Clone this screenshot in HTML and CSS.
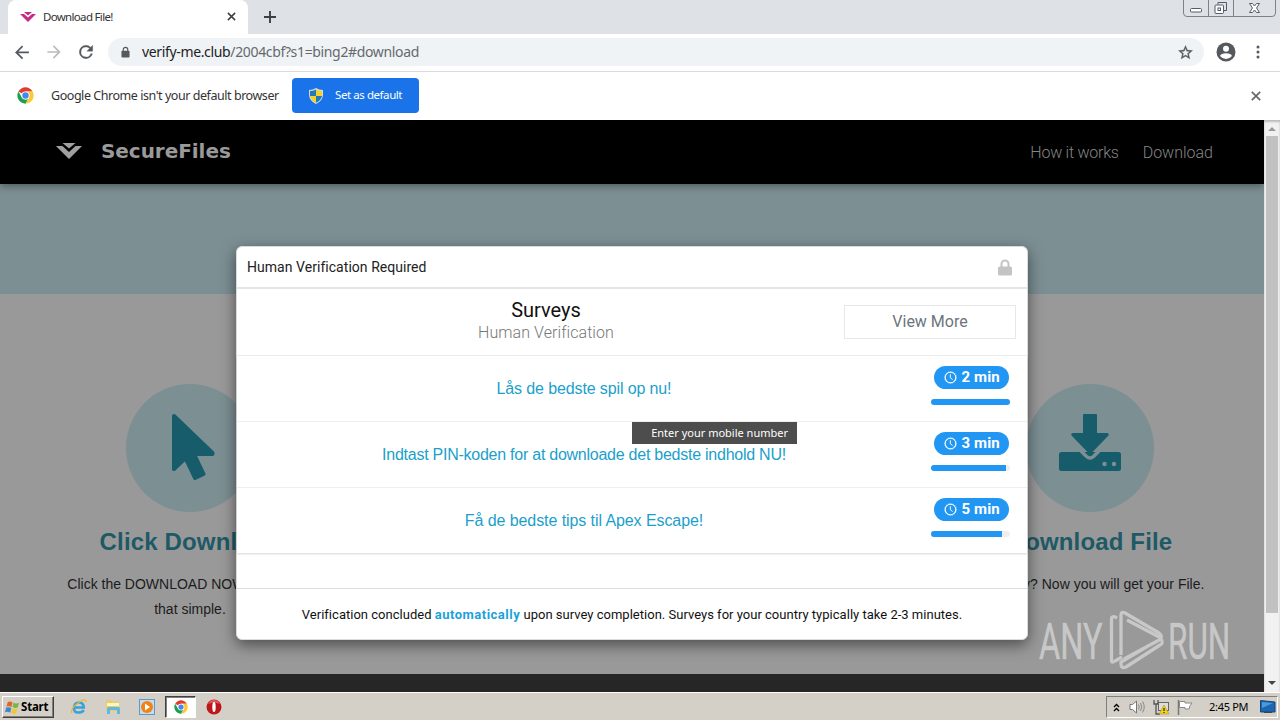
FILE: index.html
```html
<!DOCTYPE html>
<html lang="en">
<head>
<meta charset="utf-8">
<title>Download File!</title>
<link rel="stylesheet" href="styles.css">
</head>
<body>
<svg class="defs" width="0" height="0">
  <symbol id="chrome" viewBox="0 0 48 48">
    <circle cx="24" cy="24" r="23" fill="#fff"/>
    <path d="M24 24 4.1 12.5A23 23 0 0 1 43.900 12.500L24 12.500z" fill="#e33b2e"/>
    <path d="M24 13H44.100A23 23 0 0 1 24 47L34 30z" fill="#fcc934"/>
    <path d="M4.100 12.500 14 30 24 35.500 31 34 24 47A23 23 0 0 1 4.100 12.500z" fill="#1e9e4f"/>
    <circle cx="24" cy="24" r="11.500" fill="#fff"/>
    <circle cx="24" cy="24" r="9" fill="#4587f3"/>
  </symbol>
  <symbol id="vee" viewBox="0 0 26 16">
    <path d="M0 3H6.500L13 9 19.500 3H26L13 16z"/><path d="M6.500 0H19.500L13 5.500z"/>
  </symbol>
  <symbol id="clock" viewBox="0 0 14 14">
    <circle cx="7" cy="7" r="5.700" fill="none" stroke="#fff" stroke-width="1.100"/>
    <circle cx="7" cy="7" r="6.300" fill="none" stroke="#fff" stroke-width=".8" stroke-dasharray="1.200 1.200"/>
    <path d="M6.800 3.500V7.200L9.300 9.200" fill="none" stroke="#fff" stroke-width="1"/>
  </symbol>
</svg>
<div class="screen">
  <header class="tabstrip">
    <div class="tab">
      <svg class="tab-icon" viewBox="0 0 26 16" fill="#c72a85"><use href="#vee"/></svg>
      <span class="tab-title">Download File!</span>
      <svg class="tab-close" viewBox="0 0 10 10"><path d="M1 1 9 9M9 1 1 9" stroke="#3c4043" stroke-width="1.700"/></svg>
    </div>
    <svg class="new-tab" viewBox="0 0 12 12"><path d="M6 0V12M0 6H12" stroke="#3c4043" stroke-width="1.900"/></svg>
    <svg class="window-buttons" viewBox="0 0 94 18" fill="none">
      <path d="M.5 0V13Q.5 16.500 4 16.500H89Q92.500 16.500 92.500 13V0M25.500 0V16M50.500 0V16" stroke="#7d818a"/>
      <rect x="7.500" y="8.500" width="11" height="3.500" rx="1" stroke="#555c68" fill="#fff"/>
      <path d="M35 4.500V2.500H43.500V10.500H41" stroke="#555c68"/>
      <rect x="32" y="5" width="8.500" height="8.500" rx="1" stroke="#555c68" fill="#fff"/><rect x="35" y="8" width="2.500" height="2.500" stroke="#555c68"/>
      <path d="M66.500 3.500H69.500L71.500 6 73.500 3.500H76.500L73.500 8 76.500 12.500H73.500L71.500 10 69.500 12.500H66.500L69.500 8z" stroke="#555c68" fill="#fff"/>
    </svg>
  </header>
  <div class="toolbar">
    <svg class="nav-icon" viewBox="0 0 24 24" fill="#55595e"><path d="M20 11H7.830l5.590-5.590L12 4l-8 8 8 8 1.410-1.410L7.830 13H20z" transform="translate(-.500 0) scale(1.040)"/></svg>
    <svg class="nav-icon" viewBox="0 0 24 24" fill="#bbbcbe"><path d="M12 4l-1.410 1.410L16.170 11H4v2h12.170l-5.580 5.590L12 20l8-8z"/></svg>
    <svg class="nav-icon" viewBox="0 0 24 24" fill="#55595e" stroke="#55595e" stroke-width=".4"><path d="M17.650 6.350A7.960 7.960 0 0 0 12 4a8 8 0 1 0 7.730 10h-2.080A6 6 0 1 1 12 6c1.660 0 3.140.690 4.220 1.780L13 11h7V4z"/></svg>
    <div class="omnibox">
      <svg class="padlock" viewBox="0 0 10 12"><path d="M2.500 5V3.300a2.500 2.500 0 0 1 5 0V5" fill="none" stroke="#55595e" stroke-width="1.300"/><rect x=".5" y="4.500" width="9" height="7.500" rx="1" fill="#55595e"/></svg>
      <span class="url"><b>verify-me.club</b>/2004cbf?s1=bing2#download</span>
      <svg class="star" viewBox="0 0 24 24" fill="#55595e" stroke="#55595e" stroke-width=".4"><path d="M22 9.240l-7.190-.62L12 2 9.190 8.630 2 9.240l5.460 4.730L5.820 21 12 17.270 18.180 21l-1.630-7.030zM12 15.400l-3.760 2.270 1-4.280-3.320-2.880 4.380-.38L12 6.100l1.710 4.040 4.380.38-3.320 2.880 1 4.280z"/></svg>
    </div>
    <svg class="avatar" viewBox="0 0 20 20"><circle cx="10" cy="10" r="9.500" fill="#55595e"/><circle cx="10" cy="6.700" r="3" fill="#fff"/><path d="M4 14Q5 11.200 10 11.200T16 14Q13.500 17 10 17T4 14z" fill="#fff"/></svg>
    <svg class="kebab" viewBox="0 0 4 14" fill="#55595e"><circle cx="2" cy="2" r="1.500"/><circle cx="2" cy="7" r="1.500"/><circle cx="2" cy="12" r="1.500"/></svg>
  </div>
  <div class="infobar">
    <svg class="info-chrome"><use href="#chrome"/></svg>
    <span class="info-text">Google Chrome isn't your default browser</span>
    <div class="default-button">
      <svg class="shield" viewBox="0 0 14 16"><path d="M7 0Q10 2 14 2V7Q13.500 13 7 16 .5 13 0 7V2Q4 2 7 0z" fill="#d5dbe0"/><path d="M7 1.500V8H1V3Q4 3 7 1.500zM7 8H13Q12 12.500 7 14.700z" fill="#2479b8"/><path d="M7 1.500V8H13V3Q10 3 7 1.500zM7 8H1Q2 12.500 7 14.700z" fill="#f5d22b"/></svg>
      <span>Set as default</span>
    </div>
    <svg class="info-close" viewBox="0 0 10 10"><path d="M.8.800 9.200 9.200M9.200.800.800 9.200" stroke="#686c70" stroke-width="1.800"/></svg>
  </div>
  <div class="viewport">
    <main class="page">
      <nav class="navbar">
        <svg class="brand-icon" viewBox="0 0 26 16" fill="#a0a0a0"><use href="#vee"/></svg>
        <span class="brand">SecureFiles</span>
        <span class="nav-link">How it works</span>
        <span class="nav-link second">Download</span>
      </nav>
      <div class="hero"></div>
      <section class="steps">
        <div class="step first">
          <div class="disc">
            <svg viewBox="0 0 128 128"><path d="M48 32 86.500 69V70H68L77.500 90 69 94 59.500 74 48 85V32z" fill="#175c6b" stroke="#175c6b" stroke-width="4" stroke-linejoin="round"/></svg>
          </div>
          <h2>Click Download</h2>
          <p>Click the DOWNLOAD NOW button, it's<br>that simple.</p>
        </div>
        <div class="step last">
          <div class="disc">
            <svg viewBox="0 0 128 128"><rect x="33" y="68" width="62" height="19" rx="2.500" fill="#175c6b"/><path d="M53 65 60.500 72.500Q64 75.500 67.500 72.500L75 65" fill="none" stroke="#7c8f93" stroke-width="3.500"/><path d="M57 31Q57 30 58 30H70Q71 30 71 31V49H81Q84 49.500 82 52L65.500 69Q64 70.500 62.500 69L46 52Q44 49.500 47 49H57z" fill="#175c6b"/><circle cx="78.500" cy="80" r="2.200" fill="#7c8f93"/><circle cx="88" cy="80" r="2.200" fill="#7c8f93"/></svg>
          </div>
          <h2>Download File</h2>
          <p>All ready? Now you will get your File.</p>
        </div>
      </section>
      <div class="page-footer"></div>
    </main>
    <div class="scrollbar">
      <svg viewBox="0 0 8 4" fill="#999"><path d="M0 4 4 0 8 4z"/></svg>
      <div class="thumb"></div>
      <svg class="down" viewBox="0 0 8 4" fill="#444"><path d="M0 0 4 4 8 0z"/></svg>
    </div>
    <div class="modal">
      <div class="modal-head"><span>Human Verification Required</span>
        <svg viewBox="0 0 14 17"><path d="M3.500 8V5a3.500 3.500 0 0 1 7 0V8" fill="none" stroke="#c4c4c4" stroke-width="2"/><rect y="7.500" width="14" height="9" rx="1.500" fill="#c4c4c4"/></svg>
      </div>
      <div class="survey-head">
        <div class="survey-title"><strong>Surveys</strong><span>Human Verification</span></div>
        <div class="view-more">View More</div>
      </div>
      <div class="offers">
        <div class="offer"><span class="offer-name o1">Lås de bedste spil op nu!</span><div class="time"><div class="pill"><svg><use href="#clock"/></svg><span>2 min</span></div><div class="bar"><div class="fill" style="width:100%"></div></div></div></div>
        <div class="offer"><span class="offer-name o2">Indtast PIN-koden for at downloade det bedste indhold NU!</span><div class="time"><div class="pill"><svg><use href="#clock"/></svg><span>3 min</span></div><div class="bar"><div class="fill" style="width:95%"></div></div></div></div>
        <div class="offer"><span class="offer-name o3">Få de bedste tips til Apex Escape!</span><div class="time"><div class="pill"><svg><use href="#clock"/></svg><span>5 min</span></div><div class="bar"><div class="fill" style="width:90%"></div></div></div></div>
      </div>
      <div class="modal-foot"><span>Verification concluded <b>automatically</b> upon survey completion. Surveys for your country typically take 2-3 minutes.</span></div>
      <div class="tooltip">Enter your mobile number</div>
    </div>
    <div class="watermark">
      <svg viewBox="0 0 200 70">
        <g fill="#d0d0d0" fill-opacity=".85" stroke="#d0d0d0" stroke-opacity=".6" stroke-width=".7" font-family="Roboto, sans-serif" font-size="50"><text transform="translate(3 54) scale(.65 1)">ANY</text><text transform="translate(132 54) scale(.63 1)">RUN</text></g>
        <path d="M81 13Q75.500 10 75.500 14V56Q76 58 79 56L86 52M85 50V10Q85 6 89 8L123 28Q126 30 125 33L91 15M88 54 125 34Q128 38 124 40L90 62Q85 64 85 59V57L112 41" fill="none" stroke="#d0d0d0" stroke-opacity=".85" stroke-width="3.300" stroke-linejoin="round"/>
      </svg>
    </div>
  </div>
  <footer class="taskbar">
    <div class="start">
      <svg viewBox="0 0 16 14"><path d="M3 1Q6 0 8 1.500L7 6.500Q4.500 5 1.500 6z" fill="#e5622c"/><path d="M9 2Q12 3.500 15 2L13.500 7Q11 8 8 6.500z" fill="#75b843"/><path d="M1.300 7Q4 6 6.700 7.500L5.500 12.500Q3 11 0 12z" fill="#3987cf"/><path d="M7.800 8Q10.500 9.300 13.200 8.300L12 13Q9 14.300 6.500 13z" fill="#f5c52c"/></svg>
      <span>Start</span>
    </div>
    <svg class="task-icon ie" viewBox="0 0 16 16"><path d="M3.500 8.500H12.800Q12.500 3.500 8 3.500T3 8.700 8 13.500Q11.500 13.500 12.600 11" fill="none" stroke="#35a2dd" stroke-width="2.600"/><path d="M1 14Q-1 10 7 4T15 3" fill="none" stroke="#e9b62c" stroke-width="1.200"/></svg>
    <svg class="task-icon folder" viewBox="0 0 16 16"><path d="M1 3V1H6L7 2.500H14V12H1z" fill="#e9cc6c"/><path d="M2 4H14V7H2z" fill="#fff3be"/><path d="M2 15V10Q2 8 4 8H13Q15 8 15 10V15H12V11H5V15z" fill="#5eb9de"/></svg>
    <svg class="task-icon player" viewBox="0 0 16 16"><rect x=".5" y=".5" width="15" height="15" fill="#c4dcee" stroke="#5c9acd"/><circle cx="8" cy="8" r="6" fill="#f08316"/><path d="M6 4.500V11.500L11 8z" fill="#fff"/></svg>
    <div class="active-task"><svg><use href="#chrome"/></svg></div>
    <svg class="task-icon opera" viewBox="0 0 16 16"><circle cx="8" cy="8" r="7.500" fill="#bd171b"/><path d="M2 5Q4 .8 8 1T14 5Q8 2 2 5z" fill="#df5c5b"/><ellipse cx="8" cy="8" rx="1.700" ry="5" fill="#fff"/></svg>
    <div class="tray">
      <svg class="chev" viewBox="0 0 7 9"><path d="M1 4 3.500 1.500 6 4M1 8 3.500 5.500 6 8" fill="none" stroke="#000" stroke-width="1.300"/></svg>
      <svg class="speaker" viewBox="0 0 16 14" fill="none"><path d="M1 4.500H3.500L7.500 1V13L3.500 9.500H1z" fill="#fff" stroke="#777"/><path d="M9.500 4.500Q11 7 9.500 9.500M11.500 3Q14 7 11.500 11M13.500 1.500Q17 7 13.500 12.500" stroke="#888"/></svg>
      <svg class="network" viewBox="0 0 16 16"><rect x="5.500" y="3.500" width="10" height="8" fill="#ddd" stroke="#666"/><path d="M1 1V5H5V1M3 5V15H7" fill="none" stroke="#555" stroke-width="1.300"/><path d="M11 6 16 15H6z" fill="#f5d21d" stroke="#a98511" stroke-width=".5"/><path d="M11 9V12M11 13V14" stroke="#000"/></svg>
      <svg class="flag" viewBox="0 0 16 15"><path d="M1.500 0V15" stroke="#777" stroke-width="1.500"/><path d="M2.500 1.500H8V3H15Q12.500 5.500 12 9H8V7.500H2.500z" fill="#fff" stroke="#888"/></svg>
      <span class="clock">2:45 PM</span>
      <svg class="desktop" viewBox="0 0 16 14"><path d="M.5.500 15 2V12H.5z" fill="#1c66b2" stroke="#174578"/><path d="M2 2 13 3 2 8z" fill="#4a9bdb"/><path d="M4 12.500H12" stroke="#444"/></svg>
    </div>
  </footer>
</div>
</body>
</html>
```

FILE: styles.css
```css
* { box-sizing: border-box; }
body { margin: 0; overflow: hidden; font-family: "Noto Sans", sans-serif; }
svg { display: block; flex: none; }
.defs { display: none; }
.screen { width: 1280px; height: 720px; display: flex; flex-direction: column; overflow: hidden; background: #fff; white-space: nowrap; }

.tabstrip { height: 34px; background: #dee1e6; display: flex; align-items: center; flex: none; }
.tab { width: 240px; height: 34px; margin-left: 8px; background: #fff; border-radius: 8px 8px 0 0; display: flex; align-items: center; padding: 0 12px 1px 12px; }
.tab-icon { width: 16px; height: 10px; }
.tab-title { font-size: 11.5px; letter-spacing: -.68px; color: #333; margin-left: 7px; padding-bottom: 1px; flex: 1; }
.tab-close { width: 9px; height: 9px; }
.new-tab { width: 12px; height: 12px; margin-left: 16px; }
.window-buttons { width: 94px; height: 18px; margin-left: auto; margin-right: 3px; align-self: flex-start; }

.toolbar { height: 38px; border-bottom: 1px solid #d9dadd; display: flex; align-items: center; padding: 0 20px 1px 12px; flex: none; }
.nav-icon { width: 20px; height: 20px; margin-right: 12px; }
.omnibox { width: 1096px; height: 28px; border-radius: 14px; background: #f0f3f5; display: flex; align-items: center; padding: 0 10px 0 13px; }
.padlock { width: 9px; height: 12px; }
.url { flex: 1; margin-left: 12px; font-size: 14px; letter-spacing: -.35px; color: #65696e; padding-bottom: 1px; }
.url b { font-weight: 400; color: #202124; }
.star { width: 17px; height: 17px; }
.avatar { width: 20px; height: 20px; margin-left: 12px; }
.kebab { width: 4px; height: 14px; margin-left: 20px; }

.infobar { height: 48px; display: flex; align-items: center; padding: 0 19px 1px 17px; flex: none; }
.info-chrome { width: 17px; height: 17px; }
.info-text { width: 241px; padding-left: 17px; font-size: 12.5px; letter-spacing: -.45px; color: #333; }
.default-button { width: 127px; height: 35px; margin-left: 17px; border-radius: 4px; background: #1a73e8; color: #fff; font-size: 11.5px; letter-spacing: -.43px; display: flex; align-items: center; padding-left: 17px; }
.default-button span { margin-left: 12px; padding-bottom: 2px; }
.shield { width: 14px; height: 16px; }
.info-close { width: 10px; height: 10px; margin-left: auto; margin-top: 1px; }

.viewport { height: 572px; position: relative; display: flex; flex: none; }
.page { width: 1264px; overflow: hidden; font-family: "Liberation Sans", Arial, sans-serif; }
.navbar { height: 64px; background: #000; display: flex; align-items: center; padding: 0 51px 0 56px; position: relative; box-shadow: 0 2px 8px rgba(0,0,0,.4); }
.brand-icon { width: 26px; height: 16px; margin-top: -2px; }
.brand { margin: -2px auto 0 19px; font: bold 20px "DejaVu Sans", sans-serif; letter-spacing: -.05px; color: #9a9a9a; }
.nav-link { font: 300 16px Roboto, sans-serif; letter-spacing: -.25px; color: #858585; }
.second { margin-left: 24px; letter-spacing: 0; }
.hero { height: 110px; background: #7c8f93; }
.steps { height: 380px; background: #999; display: flex; justify-content: space-between; padding: 90px 24px 0 40px; }
.step { width: 300px; display: flex; flex-direction: column; align-items: center; }
.disc { width: 128px; height: 128px; border-radius: 50%; background: #7c8f93; }
.step h2 { margin: 15px 0 0; font-size: 24px; line-height: 30px; letter-spacing: .15px; color: #205966; }
.step p { margin: 15px 0 0; font-size: 14px; line-height: 25px; color: #1c1c1c; text-align: center; }
.page-footer { height: 18px; background: #262626; }
.scrollbar { width: 16px; background: #f1f1f1; display: flex; flex-direction: column; align-items: center; padding: 7px 0; box-shadow: inset 0 2px 2px #bbb; }
.scrollbar svg { width: 8px; height: 4px; }
.thumb { width: 12px; height: 477px; margin-top: 5px; background: #c1c1c1; }
.scrollbar .down { margin-top: auto; }

.modal { position: absolute; left: 236px; top: 126px; width: 792px; height: 394px; background: #fff; border: 1px solid #d8dcdc; border-radius: 6px; box-shadow: 0 5px 15px rgba(0,0,0,.5); font-family: Roboto, sans-serif; display: flex; flex-direction: column; }
.modal-head { height: 42px; border-bottom: 2px solid #e5e5e5; display: flex; align-items: center; justify-content: space-between; padding: 0 15px 0 10px; font-size: 14px; letter-spacing: .04px; color: #222; }
.modal-head svg { width: 14px; height: 17px; }
.survey-head { height: 67px; border-bottom: 1px solid #eee; display: flex; align-items: center; padding-right: 11px; }
.survey-title { width: 618px; margin-right: -11px; flex: none; display: flex; flex-direction: column; align-items: center; }
.survey-title strong { font-size: 20px; line-height: 20px; padding-bottom: 2px; font-weight: 400; color: #111; }
.survey-title span { font-size: 16px; line-height: 22px; font-weight: 300; color: #777; letter-spacing: .07px; }
.view-more { width: 172px; height: 34px; margin-left: auto; flex: none; border: 1px solid #e8e8e8; color: #6c757d; font-size: 16px; line-height: 32px; text-align: center; }
.offers { box-shadow: 0 1px 2px rgba(0,0,0,.16); }
.offer { height: 66px; border-bottom: 1px solid #eee; display: flex; }
.offer:last-child { border-bottom: 0; height: 65px; }
.offer-name { width: 694px; font-family: "Liberation Sans", Arial, sans-serif; font-size: 16px; line-height: 65px; text-align: center; color: #1b9fcb; }
.o1 { letter-spacing: -.12px; }
.o2 { letter-spacing: -.25px; }
.o3 { letter-spacing: -.08px; }
.time { width: 79px; padding-top: 10px; display: flex; flex-direction: column; align-items: center; }
.pill { width: 75px; height: 23px; margin-left: 1px; border-radius: 12px; background: #2196f3; color: #fff; display: flex; align-items: center; padding-left: 10px; font-size: 15px; font-weight: 700; }
.pill svg { width: 13px; height: 13px; margin-right: 5px; margin-top: -1px; }
.pill span { padding-bottom: 2px; letter-spacing: .1px; }
.bar { width: 79px; height: 6px; margin-top: 10px; border-radius: 3px; background: #eee; overflow: hidden; }
.fill { height: 6px; background: #2196f3; }
.modal-foot { height: 51px; margin-top: auto; border-top: 1px solid #ddd; color: #111; font-size: 13px; text-align: center; line-height: 52px; letter-spacing: .02px; }
.modal-foot b { color: #1da1da; letter-spacing: .5px; }
.modal-foot span { word-spacing: -.05px; }
.tooltip { position: absolute; left: 395px; top: 175px; width: 165px; height: 22px; background: #4d4d4d; color: #fff; font: 11px/22px "Noto Sans", sans-serif; text-align: right; padding-right: 9px; }
.watermark { position: absolute; left: 1036px; top: 485px; width: 200px; height: 70px; }
.watermark svg { overflow: visible; }

.taskbar { height: 28px; background: #d4d0c8; border-top: 1px solid #fff; display: flex; align-items: center; padding: 1px 2px 0; flex: none; font-size: 11px; color: #000; }
.start { width: 52px; height: 22px; background: #d4d0c8; border: 1px solid; border-color: #fff #404040 #404040 #fff; box-shadow: inset -1px -1px #808080; display: flex; align-items: center; padding-left: 2px; gap: 1px; font-weight: 700; font-size: 11.5px; letter-spacing: -.2px; }
.start svg { width: 15px; height: 15px; }
.start span { padding-bottom: 1px; }
.task-icon { width: 16px; height: 16px; }
.ie { margin-left: 17px; }
.folder { margin-left: 18px; }
.player { margin-left: 18px; }
.active-task { width: 31px; height: 22px; margin-left: 10px; background: #fff; border: 1px solid; border-color: #404040 #fff #fff #404040; box-shadow: inset 1px 1px #808080; display: flex; align-items: center; justify-content: center; }
.active-task svg { width: 14px; height: 14px; }
.opera { margin-left: 10px; }
.tray { width: 172px; height: 22px; margin-left: auto; border: 1px solid; border-color: #808080 #fff #fff #808080; display: flex; align-items: center; padding-left: 6px; }
.chev { width: 7px; height: 9px; }
.speaker { width: 16px; height: 14px; margin-left: 9px; }
.network { width: 16px; height: 16px; margin-left: 8px; }
.flag { width: 16px; height: 15px; margin-left: 8px; }
.clock { margin-left: 16px; width: 40px; letter-spacing: -.3px; padding-bottom: 1px; }
.desktop { width: 16px; height: 14px; margin-left: 11px; }
```
